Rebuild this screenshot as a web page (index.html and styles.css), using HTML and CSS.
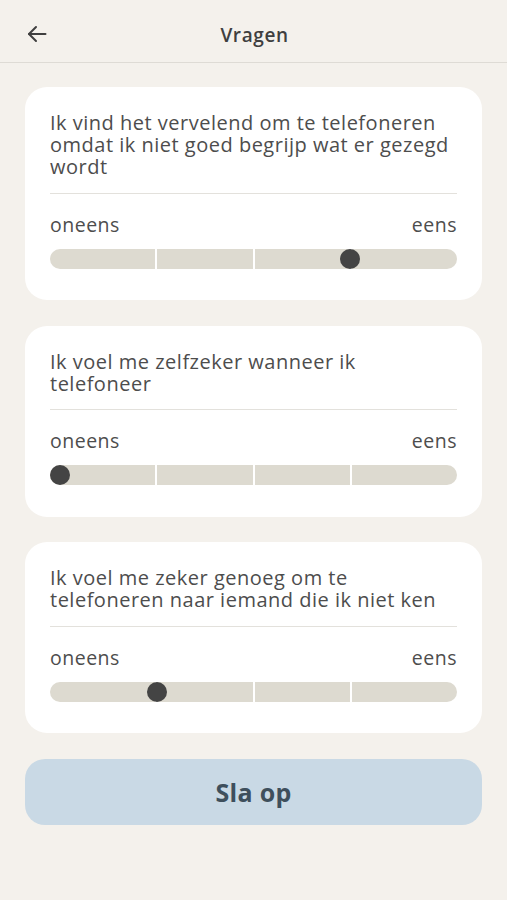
FILE: index.html
```html
<!DOCTYPE html>
<html lang="nl">
<head>
<meta charset="utf-8">
<title>Vragen</title>
<link rel="stylesheet" href="styles.css">
</head>
<body>
<div class="screen">
  <header class="topbar">
    <button class="back" aria-label="Terug">
      <svg width="24" height="24" viewBox="0 0 24 24" fill="none" stroke="#3f3f3f" stroke-width="2" stroke-linecap="round" stroke-linejoin="round"><path d="M20.5 12H4"/><path d="M11 5l-7 7 7 7"/></svg>
    </button>
    <h1 class="title">Vragen</h1>
    <span class="spacer"></span>
  </header>

  <main class="content">
    <section class="card">
      <p class="question">Ik vind het vervelend om te telefoneren omdat ik niet goed begrijp wat er gezegd wordt</p>
      <hr class="divider">
      <div class="labels"><span>oneens</span><span>eens</span></div>
      <div class="slider">
        <div class="track"><span></span><span></span><span></span><span></span></div>
        <span class="thumb" style="--v:3"></span>
      </div>
    </section>

    <section class="card">
      <p class="question">Ik voel me zelfzeker wanneer ik telefoneer</p>
      <hr class="divider">
      <div class="labels"><span>oneens</span><span>eens</span></div>
      <div class="slider">
        <div class="track"><span></span><span></span><span></span><span></span></div>
        <span class="thumb" style="--v:0"></span>
      </div>
    </section>

    <section class="card">
      <p class="question">Ik voel me zeker genoeg om te telefoneren naar iemand die ik niet ken</p>
      <hr class="divider">
      <div class="labels"><span>oneens</span><span>eens</span></div>
      <div class="slider">
        <div class="track"><span></span><span></span><span></span><span></span></div>
        <span class="thumb" style="--v:1"></span>
      </div>
    </section>

    <button class="save">Sla op</button>
  </main>
</div>
</body>
</html>
```

FILE: styles.css
```css
* { box-sizing: border-box; }
html, body {
  margin: 0;
  padding: 0;
  background: #f4f1ec;
}
body {
  font-family: "Open Sans", Lato, sans-serif;
  color: #4a4a4a;
}
.screen {
  width: 507px;
  min-height: 900px;
}
.topbar {
  height: 63px;
  display: flex;
  align-items: center;
  justify-content: space-between;
  padding: 7px 22px 0 24px;
  border-bottom: 1px solid #dedbd5;
}
.back {
  background: none;
  border: 0;
  padding: 0;
  width: 26px;
  height: 26px;
  display: flex;
  align-items: center;
  justify-content: center;
  margin-top: -2px;
}
.spacer { width: 26px; }
.title {
  margin: 0;
  font-size: 19px;
  font-weight: 600;
  color: #3f3f3f;
  letter-spacing: 0.6px;
}
.content {
  padding: 24px 25px 0;
  display: flex;
  flex-direction: column;
  gap: 25.5px;
}
.card {
  background: #ffffff;
  border-radius: 22px;
  padding: 25px 25px 31.5px 25px;
}
.question {
  margin: 0;
  font-size: 20px;
  line-height: 22px;
  letter-spacing: 0.5px;
  color: #4d4d4d;
}
.divider {
  margin: 14.5px 0 0;
  border: 0;
  border-top: 1.5px solid #e3e1dc;
}
.labels {
  display: flex;
  justify-content: space-between;
  margin-top: 20px;
  font-size: 19.5px;
  line-height: 22px;
  letter-spacing: 0.5px;
  color: #4d4d4d;
}
.slider {
  position: relative;
  margin-top: 13px;
  height: 20px;
}
.track {
  display: grid;
  grid-template-columns: 106fr 96fr 96fr 106fr;
  gap: 2px;
  height: 20px;
  border-radius: 10px;
  overflow: hidden;
}
.track span {
  background: #dddad0;
}
.thumb {
  position: absolute;
  top: 0;
  left: calc(10px + (100% - 20px) * var(--v) / 4);
  width: 20px;
  height: 20px;
  margin-left: -10px;
  border-radius: 50%;
  background: #444444;
}
.save {
  height: 66px;
  border: 0;
  border-radius: 20px;
  background: #c9d9e5;
  color: #3e4f5c;
  font-family: inherit;
  font-size: 25px;
  font-weight: 700;
  letter-spacing: 0.3px;
}
```
